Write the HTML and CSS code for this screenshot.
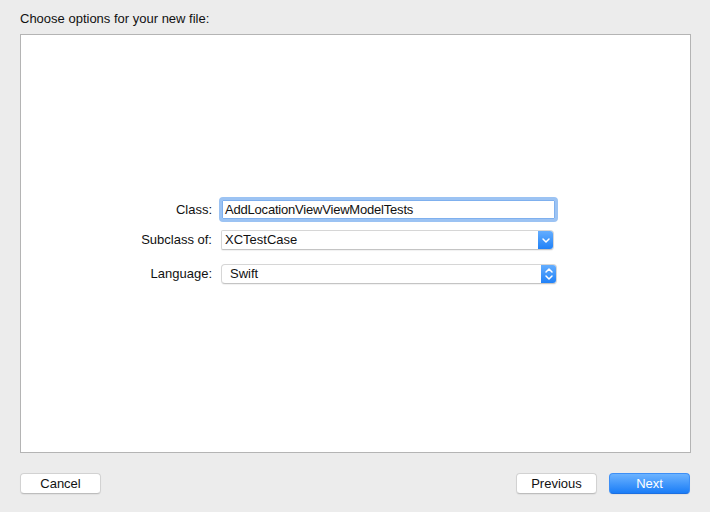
FILE: index.html
```html
<!DOCTYPE html>
<html>
<head>
<meta charset="utf-8">
<link rel="stylesheet" href="styles.css">
</head>
<body>
<div class="title">Choose options for your new file:</div>
<div class="panel">
  <div class="form">
    <div class="row row-class">
      <div class="label">Class:</div>
      <div class="textfield">AddLocationViewViewModelTests</div>
    </div>
    <div class="row row-sub">
      <div class="label">Subclass of:</div>
      <div class="combo">
        <span class="combo-text">XCTestCase</span>
        <span class="combo-btn">
          <svg width="16" height="20" viewBox="0 0 16 20"><path d="M5 9 L8 12 L11 9" fill="none" stroke="#fff" stroke-width="1.5" stroke-linecap="round" stroke-linejoin="round"/></svg>
        </span>
      </div>
    </div>
    <div class="row row-lang">
      <div class="label">Language:</div>
      <div class="popup">
        <span class="popup-text">Swift</span>
        <span class="popup-btn">
          <svg width="16" height="20" viewBox="0 0 16 20"><path d="M5 8 L8 5 L11 8 M5 12 L8 15 L11 12" fill="none" stroke="#fff" stroke-width="1.5" stroke-linecap="round" stroke-linejoin="round"/></svg>
        </span>
      </div>
    </div>
  </div>
</div>
<div class="buttons">
  <div class="btn">Cancel</div>
  <div class="spacer"></div>
  <div class="btn">Previous</div>
  <div class="btn btn-primary">Next</div>
</div>
</body>
</html>
```
FILE: styles.css
```css
* { box-sizing: border-box; }
html, body { margin: 0; padding: 0; }
body {
  width: 710px;
  height: 512px;
  background: #ececec;
  font-family: "Liberation Sans", Arial, sans-serif;
  font-size: 13px;
  color: #111;
  overflow: hidden;
}
.title {
  padding: 11px 0 0 20px;
  line-height: 16px;
  height: 27px;
}
.panel {
  margin: 7px 19px 0 20px;
  width: 671px;
  height: 419px;
  background: #fff;
  border: 1px solid #b4b4b4;
  padding-top: 162px;
}
.form { display: flex; flex-direction: column; }
.row { display: flex; align-items: center; }
.label {
  width: 191px;
  text-align: right;
  line-height: 16px;
}
.row-sub { margin-top: 8px; }
.row-lang { margin-top: 14px; }
.textfield {
  margin-left: 7px;
  width: 339px;
  height: 25px;
  border: 3px solid #9cc3f3;
  border-radius: 4px;
  box-shadow: inset 0 0 0 1px #7fb0ee;
  padding-left: 3px;
  line-height: 19px;
  background: #fff;
  letter-spacing: -0.2px;
}
.combo, .popup {
  margin-left: 9px;
  height: 20px;
  display: flex;
  align-items: center;
  background: #fff;
  border: 1px solid #d6d6d6;
  border-bottom-color: #c4c4c4;
  border-radius: 4px;
  box-shadow: 0 1px 1px rgba(0,0,0,0.06);
  overflow: hidden;
}
.combo { width: 333px; border-radius: 2px 4px 4px 2px; }
.popup { width: 336px; }
.combo-text { flex: 1; padding-left: 3px; line-height: 18px; }
.popup-text { flex: 1; padding-left: 8px; line-height: 18px; }
.combo-btn, .popup-btn {
  width: 16px;
  height: 20px;
  margin: -1px -1px -1px 0;
  border-radius: 0 4px 4px 0;
  background: linear-gradient(#68b0ff, #1d7ff7);
  display: flex;
  align-items: center;
  justify-content: center;
}
.combo-btn svg, .popup-btn svg { display: block; }
.buttons {
  display: flex;
  margin: 20px 20px 0 20px;
  gap: 12px;
}
.spacer { flex: 1; }
.btn {
  width: 81px;
  height: 21px;
  line-height: 20px;
  text-align: center;
  background: #fff;
  border-radius: 4px;
  border: 1px solid #d2d2d2;
  border-bottom-color: #bdbdbd;
  box-shadow: 0 1px 1px rgba(0,0,0,0.05);
  color: #111;
}
.btn-primary {
  background: linear-gradient(#6cb3ff, #1a7df7);
  border-color: #3d8ff6;
  border-bottom-color: #1c6fe0;
  color: #fff;
}
```
